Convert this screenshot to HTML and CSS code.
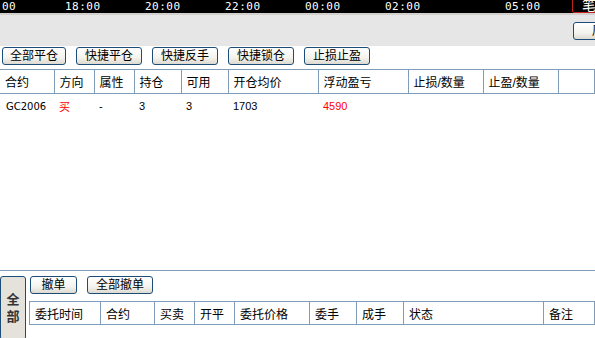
FILE: index.html
```html
<!DOCTYPE html>
<html lang="zh-CN">
  <head>
    <meta charset="UTF-8" />
    <title>持仓</title>
    <link rel="stylesheet" href="styles.css">
  </head>
  <body>
    <div class="chart">
      <span class="tick" style="left: 2px">00</span>
      <span class="tick" style="left: 65px">18:00</span>
      <span class="tick" style="left: 145px">20:00</span>
      <span class="tick" style="left: 225px">22:00</span>
      <span class="tick" style="left: 305px">00:00</span>
      <span class="tick" style="left: 385px">02:00</span>
      <span class="tick" style="left: 505px">05:00</span>
      <span class="mark">笔</span>
    </div>
    <div class="strip"></div>
    <div class="toolbar">
      <button class="btn side">周期</button>
    </div>

    <div class="panel">
      <div class="actions">
        <button class="btn">全部平仓</button>
        <button class="btn w66">快捷平仓</button>
        <button class="btn w66">快捷反手</button>
        <button class="btn w66">快捷锁仓</button>
        <button class="btn w66">止损止盈</button>
      </div>
      <table class="grid pos">
        <colgroup>
          <col style="width: 54px" /><col style="width: 40px" /><col style="width: 40px" />
          <col style="width: 47px" /><col style="width: 47px" /><col style="width: 90px" />
          <col style="width: 90px" /><col style="width: 75px" /><col style="width: 75px" /><col />
        </colgroup>
        <thead>
          <tr>
            <th>合约</th><th>方向</th><th>属性</th><th>持仓</th><th>可用</th>
            <th>开仓均价</th><th>浮动盈亏</th><th>止损/数量</th><th>止盈/数量</th><th></th>
          </tr>
        </thead>
        <tbody>
          <tr>
            <td class="code">GC2006</td><td class="red">买</td><td>-</td><td>3</td><td>3</td>
            <td>1703</td><td class="red">4590</td><td></td><td></td><td></td>
          </tr>
        </tbody>
      </table>
    </div>

    <div class="orders">
      <button class="tab">全<br />部</button>
      <div class="orders-main">
        <div class="actions small">
          <button class="btn w47">撤单</button>
          <button class="btn w66">全部撤单</button>
        </div>
        <table class="grid ord">
          <colgroup>
            <col style="width: 71px" /><col style="width: 54px" /><col style="width: 40px" />
            <col style="width: 40px" /><col style="width: 75px" /><col style="width: 47px" />
            <col style="width: 47px" /><col style="width: 140px" /><col />
          </colgroup>
          <thead>
            <tr>
              <th>委托时间</th><th>合约</th><th>买卖</th><th>开平</th><th>委托价格</th>
              <th>委手</th><th>成手</th><th>状态</th><th>备注</th>
            </tr>
          </thead>
        </table>
      </div>
    </div>
  </body>
</html>
```

FILE: styles.css
```css
body {
  margin: 0;
  width: 595px;
  height: 338px;
  overflow: hidden;
  background: #ffffff;
  font-family: "Liberation Sans", "Noto Sans CJK SC", sans-serif;
  font-size: 12px;
  color: #000000;
}

.chart {
  position: relative;
  height: 13px;
  background: #000000;
  overflow: hidden;
}

.tick {
  position: absolute;
  top: 0;
  color: #ffffff;
  font-family: "DejaVu Sans Mono", monospace;
  font-size: 11px;
  line-height: 13px;
  letter-spacing: 0.5px;
}

.mark {
  position: absolute;
  left: 572px;
  top: -3px;
  width: 30px;
  height: 16px;
  box-sizing: border-box;
  border: 1px solid #c8201c;
  border-radius: 2px;
  color: #ffffff;
  font-size: 14px;
  line-height: 15px;
  padding-left: 9px;
}

.strip {
  height: 2px;
  background: #d2d0cc;
}

.toolbar {
  height: 31px;
  background: #e6e6e6;
  display: flex;
  align-items: flex-start;
  overflow: hidden;
}

.btn {
  height: 18px;
  width: 64px;
  padding: 0;
  border: 1px solid #1c4c78;
  border-radius: 3px;
  background: linear-gradient(#ffffff, #f4f3ee 60%, #dcdad0);
  font-family: inherit;
  font-size: 12px;
  line-height: 16px;
  color: #000000;
  white-space: nowrap;
  overflow: hidden;
}

.btn.side {
  margin: 7px 0 0 573px;
  width: 48px;
  flex: none;
  text-align: left;
  padding-left: 18px;
}

.w66 {
  width: 66px;
}

.w47 {
  width: 47px;
}

.panel {
  height: 224px;
}

.actions {
  display: flex;
  gap: 10px;
  padding: 1px 0 0 2px;
}

.grid {
  border-collapse: collapse;
  table-layout: fixed;
  width: 100%;
}

.grid th {
  height: 23px;
  padding: 0 0 0 5px;
  text-align: left;
  font-weight: normal;
  border: 1px solid #7f9db9;
  border-left: none;
}

.grid td {
  height: 20px;
  padding: 2px 0 0 5px;
  text-align: left;
  font-size: 11px;
}

.pos {
  margin-top: 4px;
}

.grid .code {
  font-family: "DejaVu Sans", sans-serif;
  font-size: 10px;
  padding-left: 6px;
}

.red {
  color: #ff0000;
}

.orders {
  border-top: 1px solid #7f9db9;
  display: flex;
  padding-top: 5px;
  height: 62px;
}

.tab {
  width: 26px;
  height: 64px;
  flex: none;
  padding: 0;
  border: 1px solid #1c4c78;
  border-radius: 3px;
  background: #e4e2da;
  font-family: inherit;
  font-size: 13px;
  font-weight: bold;
  line-height: 17px;
  color: #333333;
}

.orders-main {
  flex: 1;
  margin-left: 3px;
}

.small {
  padding: 0 0 0 1px;
}

.ord {
  margin-top: 7px;
  border-left: 1px solid #7f9db9;
}

.ord th {
  height: 22px;
}
```
